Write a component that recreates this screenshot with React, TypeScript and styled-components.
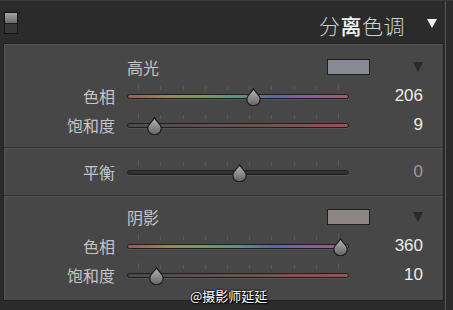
import React from 'react';
import styled, { createGlobalStyle } from 'styled-components';

const GlobalStyle = createGlobalStyle`
  html, body {
    margin: 0;
    padding: 0;
    background: #2b2b2b;
    overflow: hidden;
  }
`;

const CJK = `"Noto Sans CJK SC", "Noto Sans", sans-serif`;

const Frame = styled.div`
  position: relative;
  display: flex;
  width: 453px;
  height: 310px;
  background: #2b2b2b;
  border-top: 1px solid #3a3a3a;
  box-sizing: border-box;
`;

const Main = styled.div`
  display: flex;
  flex-direction: column;
  width: 446px;
`;

const Rail = styled.div`
  width: 7px;
  border-left: 1px solid #585858;
  background: #2b2b2b;
`;

const Header = styled.div`
  display: flex;
  align-items: center;
  height: 42px;
  padding: 0 8px 0 4px;
  box-sizing: border-box;
`;

const Toggle = styled.div`
  display: flex;
  flex-direction: column;
  width: 14px;
  height: 22px;
  border: 1px solid #141414;
  box-sizing: border-box;
  margin-top: 2px;
`;

const ToggleHalf = styled.div<{ $lit?: boolean }>`
  flex: 1;
  background: ${(p) =>
    p.$lit ? 'linear-gradient(#a4a4a4, #6a6a6a)' : '#373737'};
  border-top: ${(p) => (p.$lit ? 'none' : '1px solid #1c1c1c')};
`;

const Title = styled.div`
  margin-left: auto;
  font-family: ${CJK};
  font-size: 21px;
  font-weight: 300;
  color: #d2d2d2;
  letter-spacing: 0.5px;
  margin-top: 5px;
`;

const Strong = styled.span`
  color: #f6f6f6;
  font-weight: 500;
`;

const HeadArrow = styled.div`
  width: 0;
  height: 0;
  margin: 0 0 0 22px;
  border-left: 5px solid transparent;
  border-right: 5px solid transparent;
  border-top: 9px solid #eeeeee;
  margin-top: 2px;
`;

const Panel = styled.div`
  margin-left: 3px;
  width: 441px;
  height: 258px;
  background: #474747;
  border: 1px solid #222222;
  box-shadow: inset 1px 1px 0 #545454;
  box-sizing: border-box;
  display: flex;
  flex-direction: column;
`;

const Section = styled.div<{ $top: number; $bottom: number }>`
  padding: ${(p) => `${p.$top}px 0 ${p.$bottom}px`};
  & + & {
    border-top: 1px solid #363636;
    box-shadow: inset 0 1px 0 #525252;
  }
`;

const Grid = styled.div`
  display: grid;
  grid-template-columns: 111px 222px 62px;
  column-gap: 12px;
  align-items: center;
`;

const HeadRow = styled(Grid)`
  height: 20px;
  margin-bottom: 4px;
`;

const Row = styled(Grid)`
  height: 29px;
`;

const GroupName = styled.div`
  grid-column: 2;
  font-family: ${CJK};
  font-size: 16px;
  color: #c6c6c6;
  line-height: 20px;
  display: flex;
  align-items: center;
`;

const Swatch = styled.div<{ $color: string }>`
  margin-left: auto;
  margin-right: -21px;
  width: 43px;
  height: 16px;
  background: ${(p) => p.$color};
  border: 1px solid #1e1e1e;
  box-sizing: border-box;
`;

const DarkArrow = styled.div`
  justify-self: end;
  width: 0;
  height: 0;
  border-left: 5px solid transparent;
  border-right: 5px solid transparent;
  border-top: 10px solid #2a2a2a;
`;

const Label = styled.div`
  justify-self: end;
  font-family: ${CJK};
  font-size: 16px;
  color: #c4c4c4;
  line-height: 20px;
`;

const Value = styled.div<{ $dim?: boolean }>`
  justify-self: end;
  font-family: "Liberation Sans", Arial, sans-serif;
  font-size: 17px;
  margin-top: 1px;
  color: ${(p) => (p.$dim ? '#9c9c9c' : '#ececec')};
`;

const TrackWrap = styled.div`
  position: relative;
  height: 29px;
`;

const Track = styled.div<{ $fill: string }>`
  position: absolute;
  left: 0;
  right: 0;
  top: 13px;
  height: 5px;
  border-radius: 3px;
  background: ${(p) => p.$fill};
  border: 1px solid #1f1f1f;
  box-shadow: 0 1px 0 #555;
  box-sizing: border-box;
`;

const Tick = styled.div<{ $tall?: boolean }>`
  position: absolute;
  top: ${(p) => (p.$tall ? 3 : 5)}px;
  width: 1px;
  height: ${(p) => (p.$tall ? 6 : 4)}px;
  background: #585858;
`;

const ThumbBox = styled.svg`
  position: absolute;
  top: 7px;
  width: 15px;
  height: 18px;
  margin-left: -7.5px;
`;

const Watermark = styled.div`
  position: absolute;
  left: 190px;
  top: 285px;
  font-family: ${CJK};
  font-size: 13px;
  color: #ffffff;
  text-shadow: 0 0 2px #000, 0 0 2px #000, 1px 1px 1px #000;
`;

const HUE =
  'linear-gradient(90deg, #985a5c 0%, #988658 18%, #7a9660 33%, #5a9484 50%, #5a68a0 66%, #8a5e9e 82%, #9c5c6c 100%)';
const SAT = 'linear-gradient(90deg, #4a4a4a 0%, #6a5050 50%, #925454 100%)';
const BAL = 'linear-gradient(#383838, #2e2e2e)';

const TICKS = [5, 15, 25, 35, 45, 55, 65, 75, 85, 95];

function Thumb({ pos }: { pos: number }) {
  return (
    <ThumbBox viewBox="0 0 15 18" style={{ left: `${pos}%` }}>
      <defs>
        <linearGradient id="tg" x1="0" y1="0" x2="0" y2="1">
          <stop offset="0" stopColor="#b8b8b8" />
          <stop offset="1" stopColor="#626262" />
        </linearGradient>
      </defs>
      <path
        d="M7.5 0.8 C9 4 14.2 7.5 14.2 11.2 A6.7 6.7 0 0 1 0.8 11.2 C0.8 7.5 6 4 7.5 0.8 Z"
        fill="url(#tg)"
        stroke="#1c1c1c"
        strokeWidth="1.2"
      />
    </ThumbBox>
  );
}

function Slider({ fill, pos }: { fill: string; pos: number }) {
  return (
    <TrackWrap>
      {TICKS.map((t, i) => (
        <Tick key={t} $tall={i === 0 || i === TICKS.length - 1} style={{ left: `${t}%` }} />
      ))}
      <Track $fill={fill} />
      <Thumb pos={pos} />
    </TrackWrap>
  );
}

function SliderRow({
  label,
  fill,
  pos,
  value,
  dim,
}: {
  label: string;
  fill: string;
  pos: number;
  value: string;
  dim?: boolean;
}) {
  return (
    <Row>
      <Label>{label}</Label>
      <Slider fill={fill} pos={pos} />
      <Value $dim={dim}>{value}</Value>
    </Row>
  );
}

function GroupHead({ name, color }: { name: string; color: string }) {
  return (
    <HeadRow>
      <GroupName>
        {name}
        <Swatch $color={color} />
      </GroupName>
      <DarkArrow />
    </HeadRow>
  );
}

export default function App() {
  return (
    <>
      <GlobalStyle />
      <Frame>
        <Main>
          <Header>
            <Toggle>
              <ToggleHalf $lit />
              <ToggleHalf />
            </Toggle>
            <Title>
              分<Strong>离</Strong>色调
            </Title>
            <HeadArrow />
          </Header>
          <Panel>
            <Section $top={13} $bottom={8}>
              <GroupHead name="高光" color="#878a92" />
              <SliderRow label="色相" fill={HUE} pos={57} value="206" />
              <SliderRow label="饱和度" fill={SAT} pos={12.5} value="9" />
            </Section>
            <Section $top={9} $bottom={9}>
              <SliderRow label="平衡" fill={BAL} pos={50.5} value="0" dim />
            </Section>
            <Section $top={11} $bottom={0}>
              <GroupHead name="阴影" color="#8d8484" />
              <SliderRow label="色相" fill={HUE} pos={96} value="360" />
              <SliderRow label="饱和度" fill={SAT} pos={13.5} value="10" />
            </Section>
          </Panel>
        </Main>
        <Rail />
        <Watermark>@摄影师延延</Watermark>
      </Frame>
    </>
  );
}
